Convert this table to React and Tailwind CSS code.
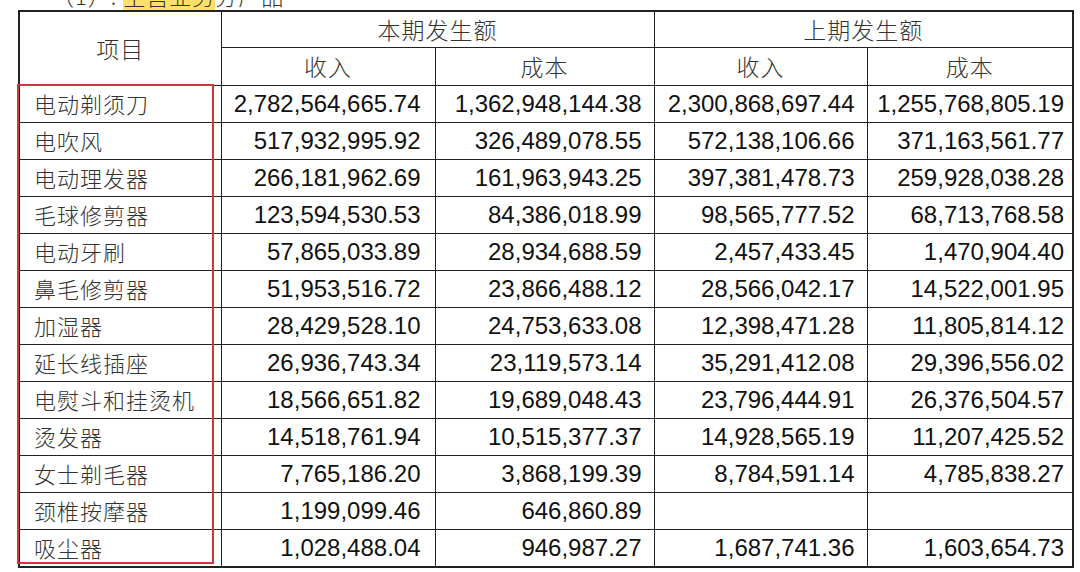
const rows = [
  ['电动剃须刀', '2,782,564,665.74', '1,362,948,144.38', '2,300,868,697.44', '1,255,768,805.19'],
  ['电吹风', '517,932,995.92', '326,489,078.55', '572,138,106.66', '371,163,561.77'],
  ['电动理发器', '266,181,962.69', '161,963,943.25', '397,381,478.73', '259,928,038.28'],
  ['毛球修剪器', '123,594,530.53', '84,386,018.99', '98,565,777.52', '68,713,768.58'],
  ['电动牙刷', '57,865,033.89', '28,934,688.59', '2,457,433.45', '1,470,904.40'],
  ['鼻毛修剪器', '51,953,516.72', '23,866,488.12', '28,566,042.17', '14,522,001.95'],
  ['加湿器', '28,429,528.10', '24,753,633.08', '12,398,471.28', '11,805,814.12'],
  ['延长线插座', '26,936,743.34', '23,119,573.14', '35,291,412.08', '29,396,556.02'],
  ['电熨斗和挂烫机', '18,566,651.82', '19,689,048.43', '23,796,444.91', '26,376,504.57'],
  ['烫发器', '14,518,761.94', '10,515,377.37', '14,928,565.19', '11,207,425.52'],
  ['女士剃毛器', '7,765,186.20', '3,868,199.39', '8,784,591.14', '4,785,838.27'],
  ['颈椎按摩器', '1,199,099.46', '646,860.89', '', ''],
  ['吸尘器', '1,028,488.04', '946,987.27', '1,687,741.36', '1,603,654.73'],
];

const cjk = "font-['Noto_Sans_CJK_SC',sans-serif] text-[22px] font-light text-[#333] tracking-[1px]";
const head = "font-['Noto_Sans_CJK_SC',sans-serif] text-[23px] font-light text-[#333] tracking-[1px] text-center";
const num = "font-['Liberation_Sans',Arial,sans-serif] text-[24px] text-[#111]";
const cell = 'border border-[#222] p-0';

export default function App() {
  return (
    <div className="w-[1080px] h-[572px] bg-white overflow-hidden">
      <div className="h-[10px] overflow-hidden pl-[52px]">
        <div className={`${cjk} leading-[24px] -mt-[17px] whitespace-nowrap`}>
          （1）. <span className="bg-[#ffe066]">主营业务</span>分产品
        </div>
      </div>

      <div className="relative ml-[18px] w-[1054px]">
        <table className="table-fixed border-collapse border-2 border-[#222] w-[1054px]">
          <colgroup>
            <col className="w-[202px]" />
            <col className="w-[214px]" />
            <col className="w-[219px]" />
            <col className="w-[213px]" />
            <col className="w-[206px]" />
          </colgroup>
          <thead>
            <tr className="h-[35px]">
              <th rowSpan={2} className={`${cell} ${head}`}>项目</th>
              <th colSpan={2} className={`${cell} ${head}`}>本期发生额</th>
              <th colSpan={2} className={`${cell} ${head}`}>上期发生额</th>
            </tr>
            <tr className="h-[38px]">
              <th className={`${cell} ${head}`}>收入</th>
              <th className={`${cell} ${head}`}>成本</th>
              <th className={`${cell} ${head}`}>收入</th>
              <th className={`${cell} ${head}`}>成本</th>
            </tr>
          </thead>
          <tbody>
            {rows.map((r) => (
              <tr key={r[0]} className="h-[37px]">
                <td className={`${cell} ${cjk} pl-[14px] text-left`}>{r[0]}</td>
                <td className={`${cell} ${num} pr-[14px] text-right`}>{r[1]}</td>
                <td className={`${cell} ${num} pr-[12px] text-right`}>{r[2]}</td>
                <td className={`${cell} ${num} pr-[12px] text-right`}>{r[3]}</td>
                <td className={`${cell} ${num} pr-[8px] text-right`}>{r[4]}</td>
              </tr>
            ))}
          </tbody>
        </table>

        {/* red annotation box over the first column */}
        <div className="absolute left-[-1px] top-[74px] w-[197px] h-[480px] border-2 border-[#d6343a] pointer-events-none" />
      </div>
    </div>
  );
}
